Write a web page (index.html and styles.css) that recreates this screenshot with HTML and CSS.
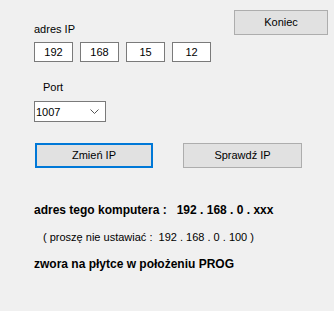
FILE: index.html
```
<!DOCTYPE html>
<html lang="pl">
	<head>
		<meta charset="utf-8">
		<title>Programator IP</title>
		<link rel="stylesheet" href="styles.css">
	</head>
	<body>
		<div class="form">
			<div class="top">
				<div class="ipblock">
					<div class="lbl">adres IP</div>
					<div class="iprow">
						<div class="box">192</div>
						<div class="box">168</div>
						<div class="box">15</div>
						<div class="box">12</div>
					</div>
				</div>
				<div class="btn koniec">Koniec</div>
			</div>
			<div class="lbl port">Port</div>
			<div class="combo">
				<span>1007</span>
				<svg width="9" height="6" viewBox="0 0 9 6"><path d="M0.5 0.5 L4.5 4.5 L8.5 0.5" fill="none" stroke="#555" stroke-width="1"/></svg>
			</div>
			<div class="btns">
				<div class="btn zmien">Zmień IP</div>
				<div class="btn sprawdz">Sprawdź IP</div>
			</div>
			<p class="info bold">adres tego komputera :&nbsp;&nbsp; 192 . 168 . 0 . xxx</p>
			<p class="info note">( proszę nie ustawiać :&nbsp; 192 . 168 . 0 . 100 )</p>
			<p class="info bold">zwora na płytce w położeniu PROG</p>
		</div>
	</body>
</html>
```
FILE: styles.css
```
html, body {
	margin: 0;
	background-color: #f0f0f0;
	color: #000;
	font-family: 'Liberation Sans', Arial, sans-serif;
	font-size: 11px;
}
.form {
	padding-left: 34px;
	width: 294px;
}
.top {
	display: flex;
	align-items: flex-start;
}
.ipblock {
	padding-top: 23px;
}
.lbl {
	line-height: 13px;
}
.iprow {
	display: flex;
	gap: 7px;
	margin-top: 6px;
}
.box {
	width: 37px;
	height: 18px;
	line-height: 18px;
	border: 1px solid #7a7a7a;
	background: #fff;
	text-align: center;
}
.btn {
	box-sizing: border-box;
	height: 25px;
	line-height: 23px;
	text-align: center;
	background: #e1e1e1;
	border: 1px solid #adadad;
}
.koniec {
	width: 94px;
	margin-top: 10px;
	margin-left: auto;
}
.port {
	margin-top: 19px;
	padding-left: 9px;
}
.combo {
	box-sizing: border-box;
	width: 72px;
	height: 21px;
	margin-top: 7px;
	border: 1px solid #7a7a7a;
	background: #fff;
	display: flex;
	align-items: center;
	justify-content: space-between;
	padding: 0 6px 0 1px;
}
.btns {
	display: flex;
	margin-top: 21px;
	padding-left: 1px;
}
.zmien {
	width: 118px;
	border: 2px solid #0078d7;
	line-height: 21px;
}
.sprawdz {
	width: 119px;
	margin-left: 30px;
}
.info {
	margin: 0;
	line-height: 14px;
}
.bold {
	font-weight: bold;
	font-size: 12px;
}
p.info:first-of-type {
	margin-top: 35px;
}
.note {
	margin-top: 13px;
	padding-left: 9px;
}
.note + .bold {
	margin-top: 13px;
}
```
